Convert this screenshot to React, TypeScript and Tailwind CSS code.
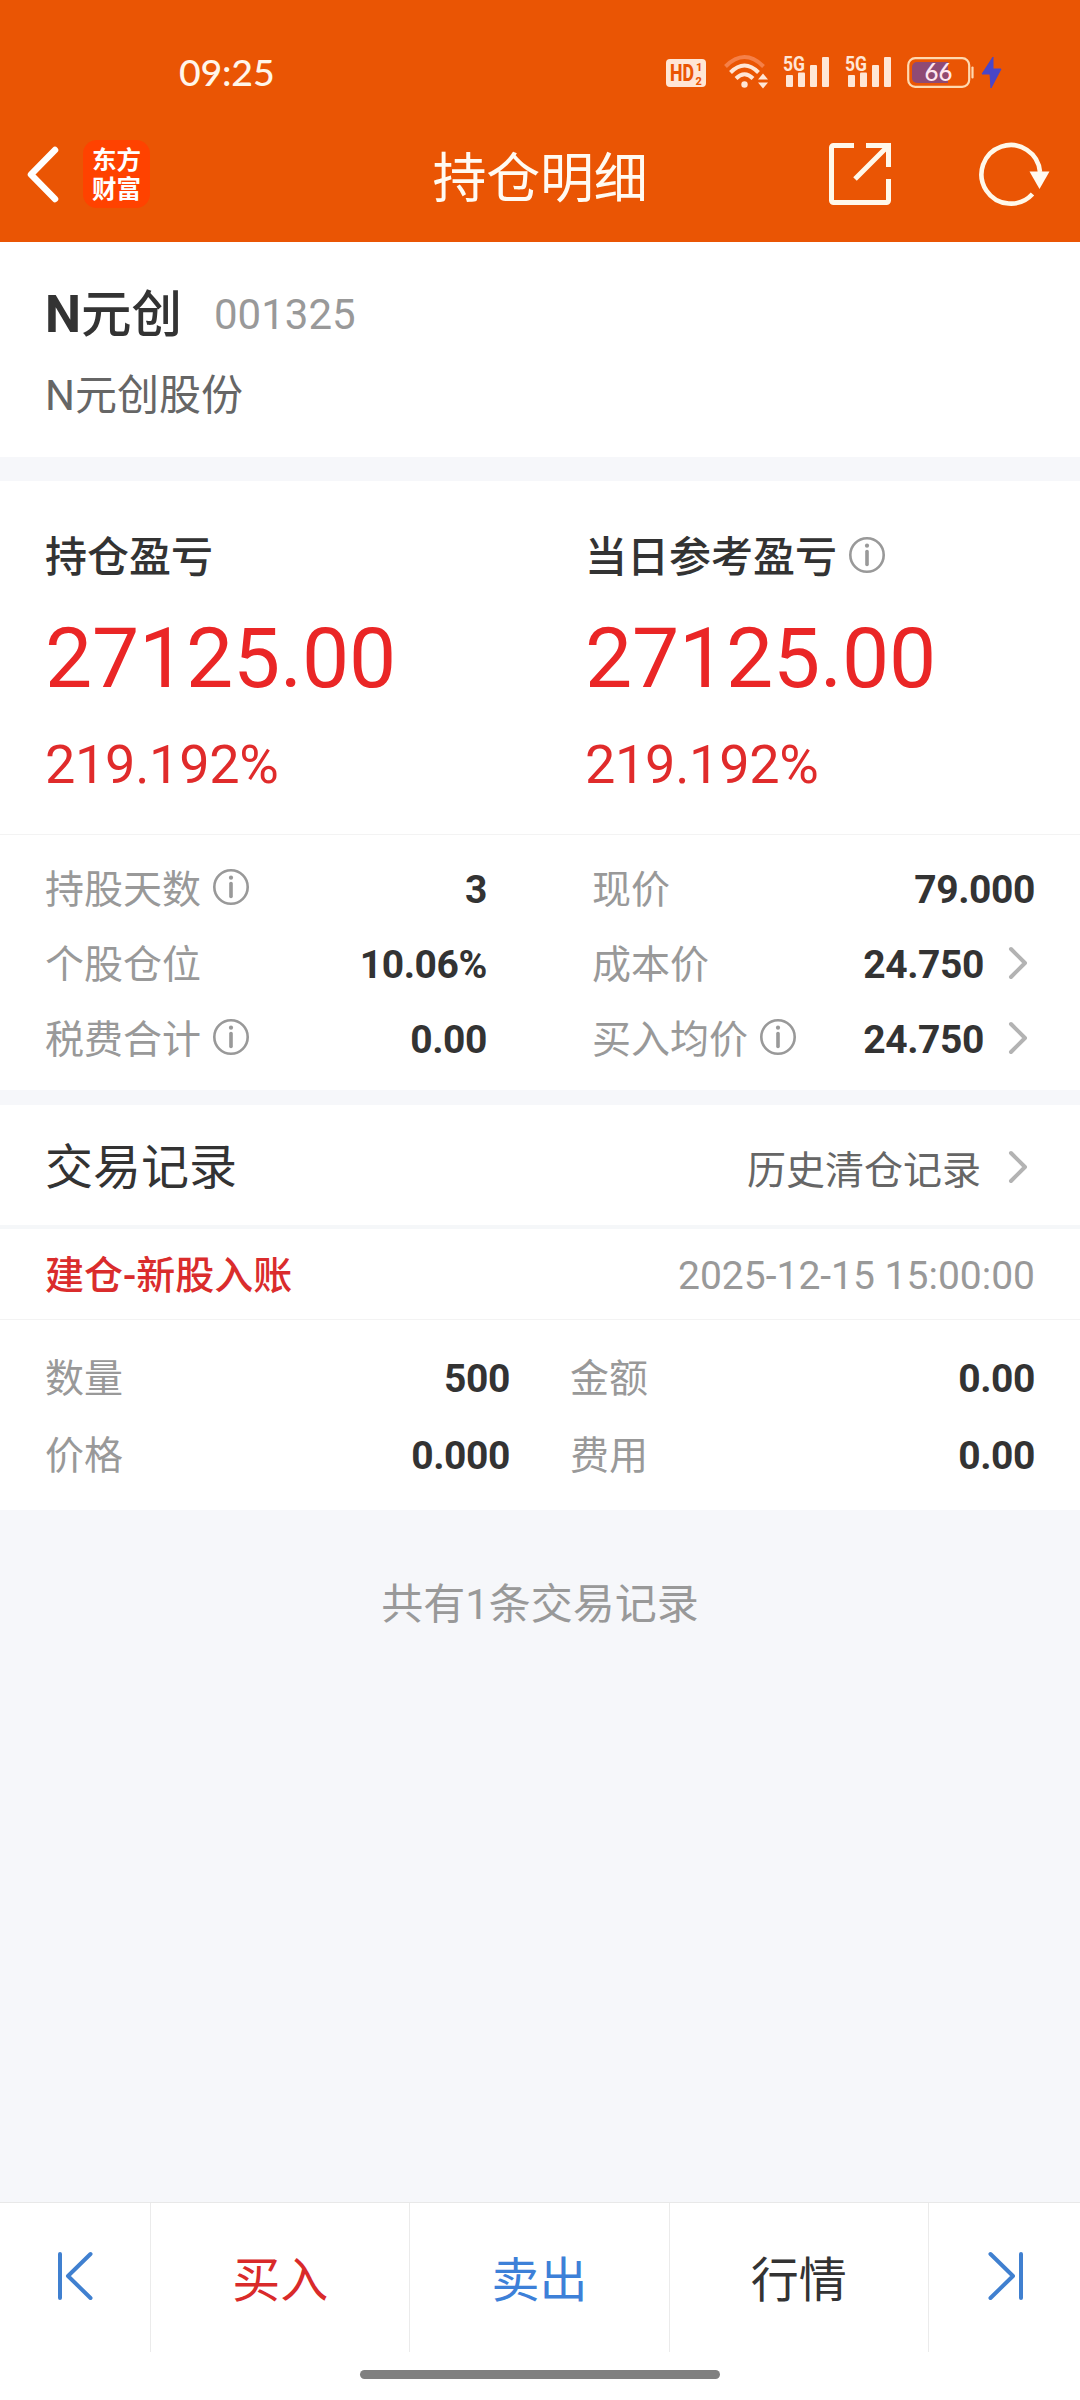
import clsx from "clsx";

type Stat = {
  label: string;
  value: string;
  info?: boolean;
  link?: boolean;
};

const HOLDING_LEFT: Stat[] = [
  { label: "持股天数", value: "3", info: true },
  { label: "个股仓位", value: "10.06%" },
  { label: "税费合计", value: "0.00", info: true },
];

const HOLDING_RIGHT: Stat[] = [
  { label: "现价", value: "79.000" },
  { label: "成本价", value: "24.750", link: true },
  { label: "买入均价", value: "24.750", info: true, link: true },
];

const RECORD_LEFT: Stat[] = [
  { label: "数量", value: "500" },
  { label: "价格", value: "0.000" },
];

const RECORD_RIGHT: Stat[] = [
  { label: "金额", value: "0.00" },
  { label: "费用", value: "0.00" },
];

function InfoIcon({ className }: { className?: string }) {
  return (
    <svg className={clsx("h-[38px] w-[38px] shrink-0", className)} viewBox="0 0 38 38" fill="none">
      <circle cx="19" cy="19" r="16.7" stroke="#999" strokeWidth="2.6" />
      <circle cx="19" cy="9.7" r="2.1" fill="#999" />
      <path d="M19 15.5v13" stroke="#999" strokeWidth="3.6" strokeLinecap="round" />
    </svg>
  );
}

function ChevronIcon({ className }: { className?: string }) {
  return (
    <svg className={clsx("h-[34px] w-[20px] shrink-0", className)} viewBox="0 0 20 34" fill="none">
      <path d="M3 3l14 14L3 31" stroke="#b3b3b3" strokeWidth="4" strokeLinecap="round" strokeLinejoin="round" />
    </svg>
  );
}

function SignalIcon() {
  return (
    <svg className="-mt-[6px] h-[42px] w-[48px]" viewBox="0 -6 48 42" fill="#ffe6d6">
      <text
        x="0"
        y="17"
        fontFamily="Roboto, sans-serif"
        fontSize="21"
        fontWeight="700"
        textLength="22"
        lengthAdjust="spacingAndGlyphs"
      >
        5G
      </text>
      <rect x="3" y="21" width="7" height="12" rx="1" />
      <rect x="15" y="18.5" width="7" height="14.5" rx="1" />
      <rect x="27" y="11" width="7" height="22" rx="1" />
      <rect x="39" y="3" width="7" height="30" rx="1" />
    </svg>
  );
}

function StatusBar() {
  return (
    <div className="flex h-[145px] items-center justify-between pr-[77px] pl-[179px]">
      <span className="mb-[2px] font-[Lato,sans-serif] text-[37.5px] leading-none font-medium tracking-[-0.2px] text-[#fff6ea]">
        09:25
      </span>
      <div className="mb-[1px] flex items-center">
        <svg className="mr-[17px] h-[36px] w-[40px]" viewBox="0 0 40 36">
          <rect x="0" y="5" width="40" height="28" rx="4" fill="#ffe6d6" />
          <g fill="#ea5504" fontFamily="Roboto, sans-serif" fontWeight="800">
            <text x="4" y="27" fontSize="23" textLength="24" lengthAdjust="spacingAndGlyphs">
              HD
            </text>
            <text x="30" y="17" fontSize="11">
              1
            </text>
            <text x="29.5" y="30.5" fontSize="11">
              2
            </text>
          </g>
        </svg>
        <svg className="mr-[14px] h-[36px] w-[46px]" viewBox="0 0 46 36" fill="none" stroke="#ffe6d6" strokeWidth="4">
          <path d="M2.5 12.5Q21.5 -6.5 40.5 12.5" stroke="#f58048" />
          <path d="M7.5 18.5Q21.5 4.5 35.5 18.5" />
          <path d="M13 24.5Q21.5 16 30 24.5" />
          <circle cx="21.5" cy="30.5" r="3.2" fill="#ffe6d6" stroke="none" />
          <path d="M40 19.5l5 6H35zM40 34.5l5-6H35z" fill="#ffe6d6" stroke="none" />
        </svg>
        <SignalIcon />
        <span className="w-[14px]" />
        <SignalIcon />
        <svg className="ml-[14px] h-[36px] w-[96px]" viewBox="0 0 96 36">
          <path d="M10 8h31v21H10a5 5 0 0 1-5-5V13a5 5 0 0 1 5-5z" fill="#8f4a74" />
          <rect x="1.2" y="4.2" width="61" height="28.6" rx="7" fill="none" stroke="#ffd9b0" strokeWidth="2.2" />
          <path d="M65.5 13.5v10" stroke="#ffd9b0" strokeWidth="2.2" strokeLinecap="round" />
          <text x="31.5" y="27" textAnchor="middle" fill="#ffe6f0" fontFamily="Lato, sans-serif" fontSize="24" fontWeight="500">
            66
          </text>
          <path d="M86 3L75 20h8l1 14 10-19h-8z" fill="#4a46c8" stroke="#4a46c8" strokeLinejoin="round" />
        </svg>
      </div>
    </div>
  );
}

function TitleBar() {
  return (
    <div className="grid h-[97px] grid-cols-[1fr_auto_1fr] text-[#fffaf2]">
      <div className="flex pl-[26px]">
        <svg className="h-[58px] w-[34px]" viewBox="0 0 34 58" fill="none">
          <path d="M29 5L5 29.5l24 24.5" stroke="#fff" strokeWidth="6.5" strokeLinecap="round" strokeLinejoin="round" />
        </svg>
        <div className="-mt-[5px] ml-[23px] flex h-[68px] w-[67px] flex-col items-center justify-center rounded-[14px] bg-[#ff4200] pt-[1px] text-[24.5px] leading-[29px] font-bold text-white">
          <span>东方</span>
          <span>财富</span>
        </div>
      </div>
      <h1 className="pt-[2px] text-[54px] leading-[66px] font-normal tracking-[-0.3px]">持仓明细</h1>
      <div className="-mt-[4px] flex justify-end pr-[29px]">
        <svg className="mr-[84px] h-[66px] w-[66px] shrink-0" viewBox="0 0 66 66" fill="none" stroke="#fff8ea" strokeWidth="5">
          <path d="M27 4.5H6.5a2 2 0 0 0-2 2v53a2 2 0 0 0 2 2h53a2 2 0 0 0 2-2V38" />
          <path d="M39 4.5h22.5V26M60.5 5.5L28 38" />
        </svg>
        <svg className="h-[66px] w-[74px] shrink-0" viewBox="0 0 74 66" fill="none">
          <path d="M55.5 53A29.3 29.3 0 1 1 63 31" stroke="#fff8ea" strokeWidth="4.6" />
          <path d="M52.5 30.5h20L62.5 48z" fill="#fffaf2" />
        </svg>
      </div>
    </div>
  );
}

function ProfitBlock({ label, info }: { label: string; info?: boolean }) {
  return (
    <div className="w-1/2 pl-[45px]">
      <div className="flex h-[50px] items-center text-[42px] leading-[50px] font-medium text-[#333]">
        {label}
        {info && <InfoIcon className="mb-[7px] ml-[11px]" />}
      </div>
      <div className="mt-[26px] text-[84px] leading-[100px] tracking-[-0.2px] text-[#ea2626]">27125.00</div>
      <div className="mt-[24px] text-[54px] leading-[64px] tracking-[-0.3px] text-[#e02b2b]">219.192%</div>
    </div>
  );
}

function StatColumn({ rows, rowClass, className }: { rows: Stat[]; rowClass: string; className?: string }) {
  return (
    <div className={className}>
      {rows.map((row) => (
        <div key={row.label} className={clsx("flex items-center text-[39px]", rowClass)}>
          <span className="text-[#999]">{row.label}</span>
          {row.info && <InfoIcon className="mb-[7px] ml-[11px]" />}
          <span className="ml-auto font-bold tracking-[-0.4px] text-[#333]">{row.value}</span>
          {row.link && <ChevronIcon className="mr-[7px] mb-[6px] ml-[24px]" />}
        </div>
      ))}
    </div>
  );
}

function EdgeIcon({ flip }: { flip?: boolean }) {
  return (
    <svg
      className={clsx("mb-[4px] h-[50px] w-[36px]", flip && "-scale-x-100")}
      viewBox="0 0 36 50"
      fill="none"
      stroke="#4080d0"
      strokeWidth="4"
      strokeLinecap="round"
      strokeLinejoin="round"
    >
      <path d="M3 3v44M33.5 3L11 25l22.5 22" />
    </svg>
  );
}

function BottomNav() {
  return (
    <nav className="h-[198px] border-t border-[#e8e8e8] bg-white">
      <div className="flex h-[149px] divide-x divide-[#ebebeb] text-[48px]">
        <div className="flex w-[151px] items-center justify-center">
          <EdgeIcon />
        </div>
        <div className="flex flex-1 items-center justify-center pt-1.5 text-[#d92a2a]">买入</div>
        <div className="flex flex-1 items-center justify-center pt-1.5 text-[#3d80d8]">卖出</div>
        <div className="flex flex-1 items-center justify-center pt-1.5 text-[#333]">行情</div>
        <div className="flex w-[151px] items-center justify-center pl-[3px]">
          <EdgeIcon flip />
        </div>
      </div>
      <div className="mx-auto mt-[18px] h-[9px] w-[360px] rounded-full bg-[#808080]" />
    </nav>
  );
}

export default function App() {
  return (
    <div className="flex h-[2400px] w-[1080px] flex-col bg-[#f6f7fa] font-[Roboto,'Noto_Sans_CJK_SC',sans-serif]">
      <header className="h-[242px] bg-[#ea5504]">
        <StatusBar />
        <TitleBar />
      </header>

      <section className="h-[215px] bg-white px-[45px] pt-[43px]">
        <div className="flex items-center">
          <span className="text-[50.5px] leading-[60px] font-medium text-[#333]">
            <b className="text-[51px]">N</b>元创
          </span>
          <span className="ml-[32px] text-[42px] leading-[60px] text-[#999]">001325</span>
        </div>
        <div className="mt-[26px] text-[42px] leading-[50px] text-[#666]">N元创股份</div>
      </section>

      <section className="mt-[24px] bg-white">
        <div className="flex h-[354px] border-b border-[#f3f3f3] pt-[52px]">
          <ProfitBlock label="持仓盈亏" />
          <ProfitBlock label="当日参考盈亏" info />
        </div>
        <div className="flex h-[255px] justify-between px-[45px] pt-[18px]">
          <StatColumn rows={HOLDING_LEFT} rowClass="h-[75px]" className="w-[442px]" />
          <StatColumn rows={HOLDING_RIGHT} rowClass="h-[75px]" className="w-[443px]" />
        </div>
      </section>

      <section className="mt-[15px] bg-white">
        <div className="flex h-[124px] items-center border-b-4 border-[#f5f7f9] px-[45px]">
          <h2 className="pt-[5px] text-[48px] leading-none text-[#333]">交易记录</h2>
          <span className="mt-[12px] ml-auto text-[39px] text-[#666]">历史清仓记录</span>
          <ChevronIcon className="mt-[4px] mr-[7px] ml-[27px]" />
        </div>
        <div className="flex h-[91px] items-center justify-between border-b border-[#f3f3f3] px-[45px] pt-[5px] text-[39px]">
          <span className="font-medium text-[#da2c2c]">建仓-新股入账</span>
          <span className="text-[#999]">2025-12-15 15:00:00</span>
        </div>
        <div className="flex h-[190px] justify-between px-[45px] pt-[21px]">
          <StatColumn rows={RECORD_LEFT} rowClass="h-[77px]" className="w-[465px]" />
          <StatColumn rows={RECORD_RIGHT} rowClass="h-[77px]" className="w-[465px]" />
        </div>
      </section>

      <p className="mt-[70px] text-center text-[42px] leading-[50px] text-[#999]">共有1条交易记录</p>

      <div className="mt-auto">
        <BottomNav />
      </div>
    </div>
  );
}
